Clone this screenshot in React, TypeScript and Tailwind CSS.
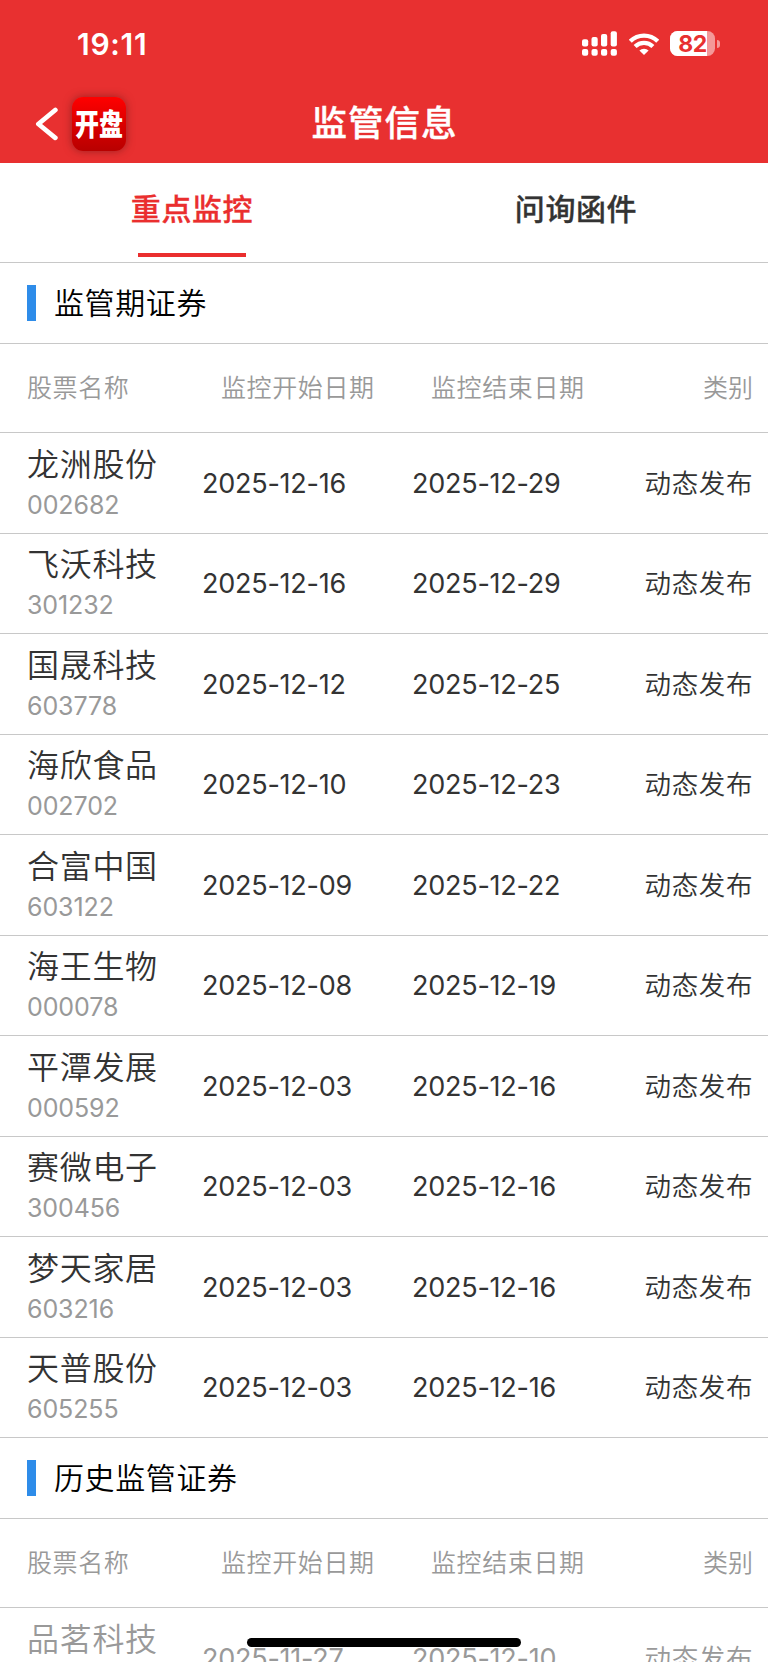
import { useState } from 'react'
import clsx from 'clsx'

interface Stock {
  name: string
  code?: string
  start: string
  end: string
  type: string
}

const MONITORED: Stock[] = [
  { name: '龙洲股份', code: '002682', start: '2025-12-16', end: '2025-12-29', type: '动态发布' },
  { name: '飞沃科技', code: '301232', start: '2025-12-16', end: '2025-12-29', type: '动态发布' },
  { name: '国晟科技', code: '603778', start: '2025-12-12', end: '2025-12-25', type: '动态发布' },
  { name: '海欣食品', code: '002702', start: '2025-12-10', end: '2025-12-23', type: '动态发布' },
  { name: '合富中国', code: '603122', start: '2025-12-09', end: '2025-12-22', type: '动态发布' },
  { name: '海王生物', code: '000078', start: '2025-12-08', end: '2025-12-19', type: '动态发布' },
  { name: '平潭发展', code: '000592', start: '2025-12-03', end: '2025-12-16', type: '动态发布' },
  { name: '赛微电子', code: '300456', start: '2025-12-03', end: '2025-12-16', type: '动态发布' },
  { name: '梦天家居', code: '603216', start: '2025-12-03', end: '2025-12-16', type: '动态发布' },
  { name: '天普股份', code: '605255', start: '2025-12-03', end: '2025-12-16', type: '动态发布' },
]

const HISTORY: Stock[] = [
  { name: '品茗科技', start: '2025-11-27', end: '2025-12-10', type: '动态发布' },
]

const TABS = ['重点监控', '问询函件']

function SignalIcon() {
  return (
    <svg width="36" height="26" viewBox="0 0 36 26" fill="currentColor">
      <rect x="0" y="8.2" width="6.2" height="7.2" rx="2" />
      <rect x="9.5" y="6" width="6.2" height="9.4" rx="2" />
      <rect x="19" y="3" width="6.2" height="12.4" rx="2" />
      <rect x="28.7" y="0.2" width="6.2" height="15.2" rx="2" />
      <rect x="0" y="18" width="6.2" height="6.8" rx="2" />
      <rect x="9.5" y="18" width="6.2" height="6.8" rx="2" />
      <rect x="19" y="18" width="6.2" height="6.8" rx="2" />
      <rect x="28.7" y="18" width="6.2" height="6.8" rx="2" />
    </svg>
  )
}

function WifiIcon() {
  return (
    <svg width="30" height="22" viewBox="0 0 30 22" fill="none" stroke="currentColor" strokeWidth="4.2">
      <path d="M1.3 8.2 A19.4 19.4 0 0 1 28.7 8.2" />
      <path d="M6.1 13.6 A12.6 12.6 0 0 1 23.9 13.6" />
      <path d="M15 22 L10.4 17.6 A6.6 6.6 0 0 1 19.6 17.6 Z" fill="currentColor" stroke="none" />
    </svg>
  )
}

function Battery({ level }: { level: number }) {
  return (
    <div className="flex items-center gap-[2px]">
      <div className="relative flex h-[25px] w-[45px] items-center justify-center overflow-hidden rounded-[7.5px] bg-white/50">
        <div className="absolute inset-y-0 left-0 bg-white" style={{ width: `${level}%` }} />
        <span className="relative pt-px text-[23px] leading-[24px] font-bold tracking-[-0.4px] text-[#e83030]">{level}</span>
      </div>
      <div className="h-[8px] w-[3px] rounded-r-full bg-white/50" />
    </div>
  )
}

function Header() {
  return (
    <header className="h-[163px] bg-[#e83030] text-white">
      <div className="flex h-[87px] items-center justify-between pr-[48px] pl-[77px]">
        <span className="text-[30px] leading-none font-semibold tracking-[0.7px]">19:11</span>
        <div className="flex items-center gap-[11px]">
          <SignalIcon />
          <WifiIcon />
          <Battery level={82} />
        </div>
      </div>
      <div className="grid h-[74px] grid-cols-3 items-center">
        <div className="flex items-center gap-[14px] pl-[35px]">
          <svg width="23" height="34" viewBox="0 0 23 34" fill="none" stroke="currentColor" strokeWidth="4.8" strokeLinecap="round" strokeLinejoin="round">
            <path d="M20.3 3 L3.4 17 L20.3 30.8" />
          </svg>
          <div className="flex size-[54px] items-center justify-center rounded-[11px] bg-linear-to-b from-[#ff0000] to-[#b80000] shadow-[0_0_8px_rgba(90,20,20,0.55)]">
            <span className="scale-x-[0.8] text-[30px] leading-none font-black whitespace-nowrap">开盘</span>
          </div>
        </div>
        <h1 className="pl-px text-center text-[35.5px] leading-none font-medium tracking-[1px] [-webkit-text-stroke:0.4px]">
          监管信息
        </h1>
      </div>
    </header>
  )
}

function SectionTitle({ title }: { title: string }) {
  return (
    <div className="flex h-[81px] items-center gap-[18px] border-b border-[#c8c8c8] pl-[27px]">
      <div className="h-[36px] w-[9px] bg-[#2e8ce9]" />
      <h2 className="text-[30px] leading-none font-[350] tracking-[0.6px] text-black">{title}</h2>
    </div>
  )
}

function TableHead() {
  return (
    <div className="flex h-[89px] items-center border-b border-[#c8c8c8] pr-[15px] pl-[27px] text-[25px] leading-none font-[350] tracking-[0.6px] text-[#999]">
      <span className="w-[194px]">股票名称</span>
      <span className="w-[210px]">监控开始日期</span>
      <span>监控结束日期</span>
      <span className="ml-auto tracking-normal">类别</span>
    </div>
  )
}

function StockRow({ stock, muted }: { stock: Stock; muted?: boolean }) {
  return (
    <div
      className={clsx(
        'flex h-[100.5px] items-center border-b border-[#c8c8c8] pr-[15px] pl-[27px]',
        muted ? 'text-[#999]' : 'text-[#333]',
      )}
    >
      <div className="h-[80px] w-[175px] pt-px">
        <p className="text-[32px] leading-[42px] font-[350] tracking-[0.7px]">{stock.name}</p>
        {stock.code && <p className="text-[25px] leading-[39px] tracking-[-0.1px] text-[#999]">{stock.code}</p>}
      </div>
      <span className="w-[210px] pt-px text-[27px] leading-none tracking-[-0.25px]">{stock.start}</span>
      <span className="pt-px text-[27px] leading-none tracking-[-0.25px]">{stock.end}</span>
      <span className="ml-auto text-[26.5px] leading-none font-[350] tracking-[0.6px]">{stock.type}</span>
    </div>
  )
}

export default function App() {
  const [activeTab, setActiveTab] = useState(0)

  return (
    <div className="relative h-[1662px] w-[768px] overflow-hidden bg-white font-[Inter,'Noto_Sans_CJK_SC',sans-serif]">
      <Header />
      <nav className="grid h-[100px] grid-cols-2 border-b border-[#c8c8c8]">
        {TABS.map((tab, i) => (
          <button
            key={tab}
            onClick={() => setActiveTab(i)}
            className={clsx(
              'flex flex-col items-center justify-between pt-[31px] pb-[5px] text-[30px] leading-none font-medium tracking-[0.6px] [-webkit-text-stroke:0.3px]',
              activeTab === i ? 'text-[#ea2e2e]' : 'text-[#333]',
            )}
          >
            {tab}
            {activeTab === i && <span className="h-[4px] w-[108px] bg-[#ea2e2e]" />}
          </button>
        ))}
      </nav>

      <SectionTitle title="监管期证券" />
      <TableHead />
      {MONITORED.map((stock) => (
        <StockRow key={stock.code} stock={stock} />
      ))}

      <SectionTitle title="历史监管证券" />
      <TableHead />
      {HISTORY.map((stock) => (
        <StockRow key={stock.name} stock={stock} muted />
      ))}

      {/* home indicator */}
      <div className="absolute bottom-[15px] left-[247px] h-[9px] w-[274px] rounded-full bg-black" />
    </div>
  )
}
